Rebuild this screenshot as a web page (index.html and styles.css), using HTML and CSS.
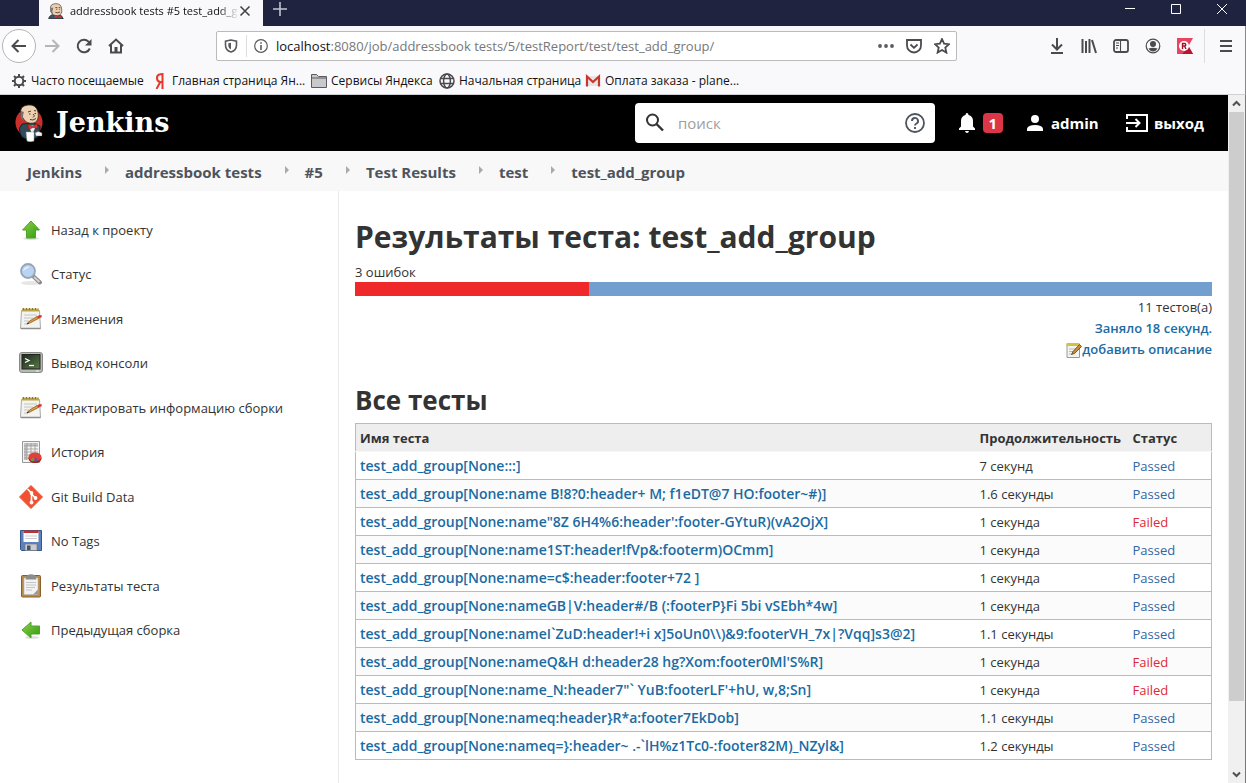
FILE: index.html
```html
<!DOCTYPE html>
<html lang="ru">
<head>
<meta charset="utf-8">
<title>addressbook tests #5 test_add_group [Jenkins]</title>
<link rel="stylesheet" href="styles.css">
</head>
<body>
<svg class="defs" aria-hidden="true">
  <defs>
    <linearGradient id="green" x1="0" y1="0" x2="1" y2="1"><stop offset="0" stop-color="#8fd04a"/><stop offset="1" stop-color="#2f9a10"/></linearGradient>
    <linearGradient id="screen" x1="0" y1="0" x2="1" y2="1"><stop offset="0" stop-color="#1c2a1a"/><stop offset="1" stop-color="#5c7a4a"/></linearGradient>
    <symbol id="head" viewBox="0 0 24 24">
      <path d="M1 24q0-5 7-7h8q6 2 7 7z" fill="#3d5563" stroke="#141414" stroke-width=".8"/>
      <path d="M4 10Q2 1 12 1q8 0 8.500 8 1.500 9-6 10Q6 19 5.500 14 3.500 13 4 10z" fill="#eccfae" stroke="#3a2a22" stroke-width=".9"/>
      <path d="M4 7Q2 14 7 17q-1-6 1-10z" fill="#777"/>
      <path d="M11 7h3M16 7h2.500M12.500 9.500h1.500M17 9.500h1M11 14q3 1.500 7-.5" fill="none" stroke="#3a2a22" stroke-width="1.200"/>
      <path d="M10 18l5 2.500 5-2v4l-5-1-5 1z" fill="#d33833"/>
    </symbol>
    <symbol id="butler" viewBox="0 0 28 38">
      <ellipse cx="14" cy="18.500" rx="13.500" ry="14" fill="#c9302c"/>
      <path d="M7 20Q3 24 5 29q1 5 6 6l11-1q4-5 3-12l-6-3z" fill="#2f4a5a" stroke="#141414" stroke-width=".8"/>
      <path d="M6 10Q4 2 13 1q8-1 10 7 1.500 9-4 11-8 1.500-11-5-2-1-2-4z" fill="#ecd2b2" stroke="#3a2a22" stroke-width=".8"/>
      <path d="M6 7Q4 14 9 17 7 12 9 8z" fill="#77716d"/>
      <path d="M13 8l3-1M19 6.500l2 .5M14 10h1.500M19.500 9.500H21M18 10q3 2 0 3.500M15 15.500q3 1.500 6-1" fill="none" stroke="#3a2a22" stroke-width=".9"/>
      <path d="M14 21l3 10 4-9z" fill="#eee"/>
      <path d="M13 20l5 2.500L22 19.500l1 5-5-1-4.500 2z" fill="#d33833" stroke="#81100c" stroke-width=".5"/>
      <path d="M11 28h8v9q-4 1.500-7 0z" fill="#fff" stroke="#999" stroke-width=".5"/>
      <path d="M20 29q3-3 7 0v3h-6z" fill="#f4f4f4" stroke="#555" stroke-width=".4"/>
    </symbol>
    <symbol id="notepad" viewBox="0 0 24 24">
      <path d="M2.500 3.500h18l1 18h-20z" fill="#f3f3f0" stroke="#aaa"/>
      <path d="M2 21.500h19.500" stroke="#8c8c8c" stroke-width="1.500"/>
      <path d="M3 1.500h17v3H3z" fill="#b9a44c"/>
      <path d="M4.500 1v2M7.500 1v2M10.500 1v2M13.500 1v2M16.500 1v2" stroke="#877632" stroke-width="1"/>
      <path d="M5 8h13M5 11h9M5 14h5M5 17h4" stroke="#c4c4c4"/>
      <path d="M8 17l2.500-3L18 9.500l1.500 2L11 16z" fill="#dc9a40" stroke="#85561b" stroke-width=".7"/>
      <path d="M18 9.500l2.500-1.500 2.500.5-.5 1.700-3 1.500z" fill="#d33c32"/><path d="M7.500 17.300l1.500-2 1 1.300z" fill="#333"/>
    </symbol>
  </defs>
</svg>

<header class="titlebar">
  <div class="tab">
    <svg class="tab-icon"><use href="#head"/></svg>
    <span class="tab-title">addressbook tests #5 test_add_g</span>
    <button class="bare" aria-label="Закрыть вкладку"><svg width="12" height="12" viewBox="0 0 12 12"><path d="M1.500 1.500l9 9M10.500 1.500l-9 9" stroke="#444" stroke-width="1.600"/></svg></button>
  </div>
  <button class="bare new-tab" aria-label="Новая вкладка"><svg width="14" height="14" viewBox="0 0 14 14"><path d="M7 0v14M0 7h14" stroke="#c4c4d0" stroke-width="1.600"/></svg></button>
  <div class="window-buttons">
    <button class="bare" aria-label="Свернуть"><svg width="10" height="10" viewBox="0 0 10 10"><path d="M0 4.500h10" stroke="#fff"/></svg></button>
    <button class="bare" aria-label="Развернуть"><svg width="10" height="10" viewBox="0 0 10 10"><path d="M.5.5h9v9h-9z" fill="none" stroke="#fff"/></svg></button>
    <button class="bare" aria-label="Закрыть"><svg width="10" height="10" viewBox="0 0 10 10"><path d="M0 0l10 10M10 0L0 10" stroke="#fff"/></svg></button>
  </div>
</header>

<nav class="toolbar" aria-label="Навигация">
  <button class="bare back" aria-label="Назад"><svg width="16" height="16" viewBox="0 0 16 16"><path d="M15 8H1.500M7.500 2L1.500 8l6 6" class="ln2"/></svg></button>
  <button class="bare" aria-label="Вперёд"><svg width="16" height="16" viewBox="0 0 16 16"><path d="M1 8h13.500M8.500 2l6 6-6 6" class="ln2 dim"/></svg></button>
  <button class="bare" aria-label="Обновить"><svg width="16" height="16" viewBox="0 0 16 16"><path d="M13.800 10.500A6.300 6.300 0 1 1 12.500 3.600L14 5" class="ln2"/><path d="M15.500 1v6.500H9z" fill="#4a4a4f"/></svg></button>
  <button class="bare" aria-label="Домой"><svg width="16" height="16" viewBox="0 0 16 16"><path d="M1 8l7-6.500L15 8M3 7v7.500h10V7" class="ln2"/><path d="M6.500 9h3v5.500h-3z" fill="#4a4a4f"/></svg></button>
  <div class="urlbar">
    <svg width="14" height="14" viewBox="0 0 14 14"><path d="M7 1L1.500 2.200V6c0 3.500 2 6 5.500 7 3.500-1 5.500-3.500 5.500-7V2.200z" fill="none" stroke="#5a5a5f" stroke-width="1.600"/><path d="M7 3.800L4.300 4.300V6.500C4.300 8.500 5.500 9.800 7 10.500z" fill="#5a5a5f"/></svg>
    <span class="url-sep"></span>
    <svg width="14" height="14" viewBox="0 0 14 14"><circle cx="7" cy="7" r="6.300" fill="none" stroke="#5a5a5f" stroke-width="1.200"/><path d="M7 6v5M7 3.200v1.600" stroke="#5a5a5f" stroke-width="1.600"/></svg>
    <div class="url"><b>localhost</b>:8080/job/addressbook tests/5/testReport/test/test_add_group/</div>
    <button class="bare" aria-label="Действия"><svg width="16" height="16" viewBox="0 0 16 16"><g fill="#5a5a5f"><circle cx="2" cy="8" r="1.900"/><circle cx="8" cy="8" r="1.900"/><circle cx="14" cy="8" r="1.900"/></g></svg></button>
    <button class="bare" aria-label="Pocket"><svg width="16" height="16" viewBox="0 0 16 16"><path d="M1 2h14v5.500a7 7 0 0 1-14 0zM4.500 6.500L8 9.800l3.500-3.300" class="ln2 thin"/></svg></button>
    <button class="bare" aria-label="В закладки"><svg width="16" height="16" viewBox="0 0 16 16"><path d="M8 1l2.100 4.700 5 .5-3.800 3.400 1.100 5L8 12l-4.400 2.600 1.100-5L.9 6.200l5-.5z" class="ln2 thin"/></svg></button>
  </div>
  <div class="tools">
    <button class="bare" aria-label="Загрузки"><svg width="16" height="16" viewBox="0 0 16 16"><path d="M8 0v11M3 6.500l5 5 5-5M2 15h12" class="ln2"/></svg></button>
    <button class="bare" aria-label="Библиотека"><svg width="16" height="16" viewBox="0 0 16 16"><path d="M1.500 1v14M5 3v12M8.500 1v14M11 2l4 13" class="ln2"/></svg></button>
    <button class="bare" aria-label="Боковые панели"><svg width="16" height="16" viewBox="0 0 16 16"><rect x="1" y="2" width="14" height="12" rx="2" class="ln2 thin"/><path d="M7.500 2v12M3 5h3M3 7.500h3M3 10h2" stroke="#4a4a4f" stroke-width="1.100"/></svg></button>
    <button class="bare" aria-label="Аккаунт"><svg width="16" height="16" viewBox="0 0 16 16"><circle cx="8" cy="8" r="6.800" fill="none" stroke="#4a4a4f" stroke-width="1.200"/><circle cx="8" cy="6" r="3" fill="#4a4a4f"/><path d="M3.500 10.500q4.500-1.500 9 0Q11 13.500 8 13.500T3.500 10.500z" fill="#4a4a4f"/></svg></button>
    <button class="bare" aria-label="Расширение"><svg width="16" height="16" viewBox="0 0 16 16"><path d="M0 0h16l-4.500 8 4.500 8H0z" fill="#ea4560"/><path d="M16 16H5l7-7z" fill="#b81530"/><circle cx="7" cy="8" r="5" fill="#fff"/><path d="M5.500 11V5.500H8q1.500 1.200 0 2.500H5.500M7.500 8L9 11" fill="none" stroke="#a01028" stroke-width="1.400"/></svg></button>
    <span class="tools-sep"></span>
    <button class="bare" aria-label="Меню"><svg width="12" height="16" viewBox="0 0 12 16"><path d="M0 3h12M0 8h12M0 13h12" stroke="#4a4a4f" stroke-width="2"/></svg></button>
  </div>
</nav>

<nav class="bookmarks" aria-label="Закладки">
  <a href="#" class="bm-often"><svg width="16" height="16" viewBox="0 0 16 16"><circle cx="8" cy="8" r="4.300" fill="none" stroke="#4a4a4f" stroke-width="2"/><path d="M8 1v3M8 12v3M1 8h3M12 8h3M3 3l2 2M11 11l2 2M13 3l-2 2M5 11l-2 2" stroke="#4a4a4f" stroke-width="2"/></svg>Часто посещаемые</a>
  <a href="#" class="bm-main"><svg width="16" height="16" viewBox="0 0 16 16"><path d="M10.500 0v16M10.500 1.200H8.300Q5 1.500 5 5t3.300 4h2.200M8.300 9L4.500 16" fill="none" stroke="#e5392b" stroke-width="2"/></svg>Главная страница Ян...</a>
  <a href="#" class="bm-services"><svg width="16" height="16" viewBox="0 0 16 16"><path d="M.5 14.500v-13h5l2 2h8v11z" fill="#c9c9cc" stroke="#5a5a5f"/><path d="M1 5h14" stroke="#5a5a5f"/></svg>Сервисы Яндекса</a>
  <a href="#" class="bm-start"><svg width="16" height="16" viewBox="0 0 16 16"><g fill="none" stroke="#4a4a4f" stroke-width="1.500"><circle cx="8" cy="8" r="7"/><ellipse cx="8" cy="8" rx="3.400" ry="7"/><path d="M1.500 5.500h13M1.500 10.500h13"/></g></svg>Начальная страница</a>
  <a href="#" class="bm-pay"><svg width="16" height="16" viewBox="0 0 16 16"><path d="M1 3h14v10H1z" fill="#e6e6e6"/><path d="M2 13.500V3.500l6 5.500 6-5.500v10" fill="none" stroke="#c8372d" stroke-width="2.200"/></svg>Оплата заказа - plane...</a>
</nav>

<div class="viewport">
  <div class="page">
    <header class="jheader">
      <a href="#" class="brand"><svg width="28" height="38" viewBox="0 0 28 38"><use href="#butler"/></svg>Jenkins</a>
      <div class="search">
        <svg width="20" height="20" viewBox="0 0 20 20"><circle cx="7.500" cy="7" r="5.500" fill="none" stroke="#333" stroke-width="2"/><path d="M11.500 11l6.500 6.500" stroke="#333" stroke-width="2.400"/></svg>
        <input type="search" placeholder="поиск" aria-label="поиск">
        <button class="bare" aria-label="Справка"><svg width="20" height="20" viewBox="0 0 20 20"><circle cx="10" cy="10" r="9" fill="none" stroke="#4d545d" stroke-width="1.800"/><path d="M7 8a3 3 0 1 1 4.500 2.500Q10 11.300 10 12.500M10 14v2" fill="none" stroke="#4d545d" stroke-width="1.900"/></svg></button>
      </div>
      <button class="bare alerts" aria-label="Уведомления"><svg width="18" height="20" viewBox="0 0 18 20"><path d="M9 0q1.500 0 1.500 2Q15 3.300 15 8v5.500l2 2V17H1v-1.500l2-2V8q0-4.700 4.500-6Q7.500 0 9 0zM7 18h4q-.5 2-2 2t-2-2z" fill="#fff"/></svg><span class="badge">1</span></button>
      <a href="#" class="user"><svg width="16" height="18" viewBox="0 0 16 18"><circle cx="8" cy="5" r="4" fill="#fff"/><path d="M0 17v-2.500Q1 11 8 11t8 3.500V17z" fill="#fff"/></svg>admin</a>
      <a href="#" class="logout"><svg width="22" height="18" viewBox="0 0 22 18"><path d="M1 5V1h20v16H1v-4M0 9h13M9.500 5L13.500 9l-4 4" fill="none" stroke="#fff" stroke-width="2"/></svg>выход</a>
    </header>

    <nav class="crumbs" aria-label="Путь">
      <a href="#">Jenkins</a><a href="#">addressbook tests</a><a href="#">#5</a><a href="#">Test Results</a><a href="#">test</a><a href="#">test_add_group</a>
    </nav>

    <div class="columns">
      <nav class="side" aria-label="Меню задачи">
        <a href="#"><svg width="24" height="24" viewBox="0 0 24 24"><ellipse cx="12" cy="20.500" rx="8" ry="1.500" fill="#ddd"/><path d="M12 3l8.500 9h-4v8h-9v-8h-4z" fill="url(#green)" stroke="#4ca527"/></svg>Назад к проекту</a>
        <a href="#"><svg width="24" height="24" viewBox="0 0 24 24"><ellipse cx="12" cy="21" rx="10" ry="2" fill="#e6e6e6"/><path d="M14 14l7 6.500" stroke="#888" stroke-width="4" stroke-linecap="round"/><path d="M15 15l5.500 5" stroke="#d5d5d5" stroke-width="1.800"/><circle cx="9" cy="9" r="7" fill="#b9d3f3" stroke="#98a4b5" stroke-width="1.800"/><path d="M4 9q1-5 7-4.500Q7 7 4 9z" fill="#e8f2fd"/></svg>Статус</a>
        <a href="#"><svg width="24" height="24"><use href="#notepad"/></svg>Изменения</a>
        <a href="#"><svg width="24" height="24" viewBox="0 0 24 24"><rect x=".5" y="1.500" width="23" height="20" rx="2.500" fill="#b9b9b5" stroke="#888a85"/><rect x="3" y="3.500" width="18" height="14.500" fill="url(#screen)" stroke="#222"/><path d="M6 7.500l4 2-4 2" fill="none" stroke="#fff" stroke-width="1.300"/><path d="M10 14.500h5" stroke="#fff" stroke-width="1.300"/><path d="M17 20h3" stroke="#eee"/></svg>Вывод консоли</a>
        <a href="#"><svg width="24" height="24"><use href="#notepad"/></svg>Редактировать информацию сборки</a>
        <a href="#"><svg width="24" height="24" viewBox="0 0 24 24"><path d="M3.500 1.500h17v21h-17z" fill="#f4f4f4" stroke="#999"/><path d="M5 3h14v3H5zM5 3h3v17H5z" fill="#c4c4c4"/><path d="M5 6h14M5 9h14M5 12h14M5 15h10M5 18h7M8 3v17M12 3v17M16 3v10" stroke="#999" stroke-width=".8"/><ellipse cx="16" cy="18.500" rx="6.500" ry="4.500" fill="#a31313"/><ellipse cx="16" cy="17" rx="6.500" ry="4.500" fill="#e0403a"/><path d="M15.500 17l-1.500 4.500q-1.500 0-2.500-1.500z" fill="#5ea83a"/><path d="M16 17l3.500 3.500q-2 1-4 1z" fill="#3c62a5"/></svg>История</a>
        <a href="#"><svg width="24" height="24" viewBox="0 0 24 24"><path d="M12 .5L23.500 12 12 23.500.5 12z" fill="#f05133" stroke="#f05133" stroke-linejoin="round"/><path d="M8.500 4l4 4v10M12.500 9l4 4" fill="none" stroke="#fff" stroke-width="1.600"/><circle cx="12.500" cy="8" r="1.900" fill="#fff"/><circle cx="12.500" cy="17.500" r="1.900" fill="#fff"/><circle cx="16.500" cy="13" r="1.900" fill="#fff"/></svg>Git Build Data</a>
        <a href="#"><svg width="24" height="24" viewBox="0 0 24 24"><path d="M1.500 1.500h21v20h-20l-1-1z" fill="#5b82be" stroke="#34558b"/><path d="M4.500 2h15v11h-15z" fill="#fff"/><path d="M4.500 1.500h15v2.500h-15z" fill="#c5302b"/><path d="M6 7h12M6 9.500h12" stroke="#ccc"/><path d="M6 15h12v6.500H6z" fill="#c9ccd0" stroke="#777" stroke-width=".7"/><path d="M8 16.500h3.500V21H8z" fill="#44536b"/></svg>No Tags</a>
        <a href="#"><svg width="24" height="24" viewBox="0 0 24 24"><rect x="2.500" y="1.500" width="19" height="21.500" rx="1" fill="#b98a4e" stroke="#86602e"/><path d="M5 4h14v16.500H5z" fill="#f3f3f3" stroke="#bbb" stroke-width=".6"/><path d="M8 1.500q4-2.500 8 0l1.500 4h-11z" fill="#8a8d8f"/><path d="M7 8.500h10M7 11h10M7 13.500h9M7 16h6" stroke="#c5c5c5"/><path d="M14 20.500l5-5v5z" fill="#999"/></svg>Результаты теста</a>
        <a href="#"><svg width="24" height="24" viewBox="0 0 24 24"><ellipse cx="13" cy="19.500" rx="7" ry="1.300" fill="#ddd"/><path d="M3 12l9-8v4h8.500v8H12v4z" fill="url(#green)" stroke="#4ca527"/></svg>Предыдущая сборка</a>
      </nav>

      <main class="main">
        <h1>Результаты теста: test_add_group</h1>
        <div class="fails">3 ошибок</div>
        <div class="bar"><div class="bar-fail" style="width:27.3%"></div></div>
        <div class="summary">
          <div>11 тестов(а)</div>
          <a href="#">Заняло 18 секунд.</a>
          <a href="#"><svg width="16" height="16" viewBox="0 0 16 16"><path d="M1 2.500h12.500v13H1z" fill="#f3f3f0" stroke="#999"/><path d="M.5 1h13v3H.5z" fill="#d8bf3c"/><path d="M3 7h7M3 9.500h5M3 12h3" stroke="#bbb"/><path d="M5.500 12.500L7 9.500 13.500 2.500 15.500 4.500 8.500 11.500z" fill="#c98d3a" stroke="#5a4020" stroke-width=".8"/></svg>добавить описание</a>
        </div>
        <h2>Все тесты</h2>
        <table class="tests">
          <thead><tr><th scope="col">Имя теста</th><th scope="col" class="dur">Продолжительность</th><th scope="col" class="st">Статус</th></tr></thead>
          <tbody>
            <tr><td><a href="#">test_add_group[None:::]</a></td><td>7 секунд</td><td class="pass">Passed</td></tr>
            <tr><td><a href="#">test_add_group[None:name B!8?0:header+ M; f1eDT@7 HO:footer~#)]</a></td><td>1.6 секунды</td><td class="pass">Passed</td></tr>
            <tr><td><a href="#">test_add_group[None:name"8Z 6H4%6:header':footer-GYtuR)(vA2OjX]</a></td><td>1 секунда</td><td class="fail">Failed</td></tr>
            <tr><td><a href="#">test_add_group[None:name1ST:header!fVp&amp;:footerm)OCmm]</a></td><td>1 секунда</td><td class="pass">Passed</td></tr>
            <tr><td><a href="#">test_add_group[None:name=c$:header:footer+72 ]</a></td><td>1 секунда</td><td class="pass">Passed</td></tr>
            <tr><td><a href="#">test_add_group[None:nameGB|V:header#/B (:footerP}Fi 5bi vSEbh*4w]</a></td><td>1 секунда</td><td class="pass">Passed</td></tr>
            <tr><td><a href="#">test_add_group[None:nameI`ZuD:header!+i x]5oUn0\\)&amp;9:footerVH_7x|?Vqq]s3@2]</a></td><td>1.1 секунды</td><td class="pass">Passed</td></tr>
            <tr><td><a href="#">test_add_group[None:nameQ&amp;H d:header28 hg?Xom:footer0Ml'S%R]</a></td><td>1 секунда</td><td class="fail">Failed</td></tr>
            <tr><td><a href="#">test_add_group[None:name_N:header7"` YuB:footerLF'+hU, w,8;Sn]</a></td><td>1 секунда</td><td class="fail">Failed</td></tr>
            <tr><td><a href="#">test_add_group[None:nameq:header}R*a:footer7EkDob]</a></td><td>1.1 секунды</td><td class="pass">Passed</td></tr>
            <tr><td><a href="#">test_add_group[None:nameq=}:header~ .-`lH%z1Tc0-:footer82M)_NZyl&amp;]</a></td><td>1.2 секунды</td><td class="pass">Passed</td></tr>
          </tbody>
        </table>
      </main>
    </div>
  </div>
  <div class="scroll">
    <button class="bare" aria-label="Вверх"><svg width="9" height="7" viewBox="0 0 9 7"><path d="M1 5.500l3.500-3.500L8 5.500" fill="none" stroke="#505050" stroke-width="2"/></svg></button>
    <div class="track"><div class="thumb"></div></div>
    <button class="bare" aria-label="Вниз"><svg width="9" height="7" viewBox="0 0 9 7"><path d="M1 1.500L4.500 5 8 1.500" fill="none" stroke="#505050" stroke-width="2"/></svg></button>
  </div>
</div>
</body>
</html>
```
FILE: styles.css
```css
* { box-sizing: border-box; }
body {
  margin: 0;
  height: 100vh;
  display: flex;
  flex-direction: column;
  overflow: hidden;
  background: #f9f9fb;
  color: #333;
  font: 13px/20px "Open Sans", "Noto Sans", sans-serif;
}
a { color: inherit; text-decoration: none; }
svg { display: block; flex: none; }
.defs { position: absolute; width: 0; height: 0; }
.bare { display: flex; align-items: center; justify-content: center; margin: 0; padding: 0; border: 0; background: none; font: inherit; color: inherit; }
.ln2 { fill: none; stroke: #4a4a4f; stroke-width: 2; }
.thin { stroke-width: 1.8; }
.dim { stroke: #b5b5b9; }

.titlebar { flex: none; height: 26px; display: flex; background: #20233f; padding-left: 39px; }
.tab { width: 224px; display: flex; align-items: center; padding: 0 12px 4px 9px; background: #f9f9fb; }
.tab-icon { width: 16px; height: 16px; margin-right: 6px; }
.tab-title { flex: 1; white-space: nowrap; font-size: 11px; color: #111; -webkit-mask-image: linear-gradient(90deg, #000 88%, transparent); mask-image: linear-gradient(90deg, #000 88%, transparent); }
.new-tab { padding: 0 10px 8px; }
.window-buttons { margin-left: auto; display: flex; gap: 36px; padding: 0 19px 8px 0; }

.toolbar { flex: none; height: 40px; display: flex; align-items: center; gap: 16px; padding: 0 13px 0 2px; border-right: 1px solid #888; }
.back { width: 34px; height: 34px; margin-right: -8px; border: 1px solid #b5b5b9; border-radius: 50%; background: #fff; }
.urlbar { flex: 1; height: 30px; margin-left: 76px; display: flex; align-items: center; gap: 12px; padding: 0 6px 0 7px; border: 1px solid #bbb; border-radius: 2px; background: #fff; }
.url-sep { width: 1px; height: 22px; background: #ddd; margin: 0 -5px 0 -4px; }
.url { flex: 1; color: #777; white-space: nowrap; overflow: hidden; margin-left: -4px; }
.url b { font-weight: 400; color: #111; }
.tools { display: flex; align-items: center; gap: 16px; margin-left: 76px; }
.tools-sep { width: 1px; height: 34px; margin: 0 -1px 0 -5px; background: #ddd; }

.bookmarks { flex: none; height: 29px; display: flex; align-items: center; padding: 1px 0 0 11px; color: #111; font-size: 12px; border-bottom: 1px solid #d0d0d4; border-right: 1px solid #888; }
.bookmarks a { display: flex; align-items: center; gap: 4px; white-space: nowrap; }
.bm-often { width: 141px; }
.bm-main { width: 159px; }
.bm-services { width: 128px; }
.bm-start { width: 146px; }

.viewport { flex: 1; min-height: 0; display: flex; border-right: 1px solid #777; background: #fff; }
.page { flex: 1; min-width: 0; display: flex; flex-direction: column; }
.jheader { flex: none; height: 56px; display: flex; align-items: center; padding: 0 24px 0 15px; background: #000; color: #fff; font-size: 15px; font-weight: 700; }
.brand { display: flex; align-items: center; gap: 13px; margin-right: auto; font: bold 27px/40px "DejaVu Serif", serif; }
.search { width: 300px; height: 40px; display: flex; align-items: center; gap: 13px; padding: 0 10px; border-radius: 4px; background: #fff; }
.search input { flex: 1; min-width: 0; border: 0; outline: 0; padding: 0; font: 15px/20px "Open Sans", sans-serif; color: #333; }
.search input::placeholder { color: #a0a0a0; }
.alerts { gap: 7px; margin-left: 23px; }
.badge { width: 20px; height: 20px; border-radius: 4px; background: #dc3545; font-size: 15px; line-height: 20px; font-weight: 700; }
.user, .logout { display: flex; align-items: center; gap: 8px; }
.user { width: 76px; margin-left: 24px; }
.logout { margin-left: 23px; gap: 6px; }

.crumbs { flex: none; height: 40px; display: flex; align-items: center; padding: 2px 27px 0; background: #f8f8f8; color: #4d545d; font-size: 15px; font-weight: 700; }
.crumbs a { display: flex; align-items: center; white-space: nowrap; }
.crumbs a + a::before { content: ""; margin: 0 16px 4px 23px; border: 4px solid transparent; border-left-color: #aaa; border-right: 0; }

.columns { flex: 1; min-height: 0; display: flex; }
.side { flex: none; width: 339px; padding: 17px 19px; border-right: 1px solid #eaeaea; }
.side a { display: flex; align-items: center; gap: 8px; height: 44px; }
.side a:nth-child(even) { margin-bottom: 1px; }

.main { flex: 1; min-width: 0; padding: 26px 16px 0; }
h1 { margin: 0 0 5px; font-size: 30px; line-height: 40px; }
h2 { margin: 20px 0 3px; font-size: 26px; line-height: 40px; }
.bar { height: 14px; background: #729fcf; }
.fails { line-height: 20px; }
.bar-fail { height: 14px; background: #ef2929; }
.summary { display: flex; flex-direction: column; align-items: flex-end; line-height: 21px; padding-top: 1px; }
.summary a { display: flex; align-items: center; color: #1a6ba3; font-weight: 600; }
.tests { width: 100%; border-collapse: collapse; border: 1px solid #bbb; }
.tests th, .tests td { height: 28px; padding: 0 4px; text-align: left; white-space: nowrap; line-height: 20px; border-bottom: 1px solid #bbb; }
.tests th { background: #eee; border-bottom-color: #f6f6f6; }
.tests .dur { width: 153px; }
.tests .st { width: 83px; }
.tests tbody tr:nth-child(even) { background: #fbfbfb; }
.tests td a { font-size: 14px; font-weight: 600; color: #1a6ba3; }
.pass { color: #3465a4; }
.tests .fail { color: #dc2a38; }

.scroll { flex: none; width: 17px; display: flex; flex-direction: column; padding: 0 1px; background: #f0f0f0; }
.scroll .bare { height: 17px; }
.track { flex: 1; }
.thumb { height: 90%; background: #cdcdcd; }
```
